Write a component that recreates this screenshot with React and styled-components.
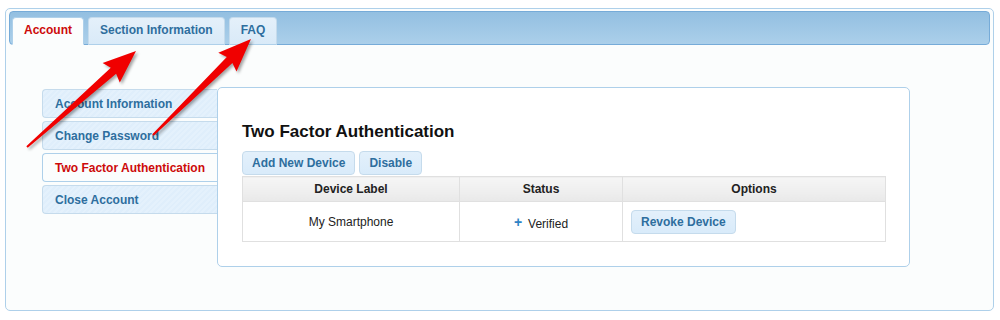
import React from "react";
import styled, { createGlobalStyle } from "styled-components";

const GlobalStyle = createGlobalStyle`
  html, body { margin: 0; padding: 0; background: #ffffff; }
  body { font-family: "Liberation Sans", Arial, sans-serif; }
  * { box-sizing: border-box; }
`;

const Page = styled.div`
  position: relative;
  width: 1000px;
  height: 320px;
  padding: 8px 0 0 5px;
`;

const Widget = styled.div`
  width: 989px;
  height: 303px;
  border: 1px solid #aed0ea;
  border-radius: 5px;
  background: #fbfdfd;
  padding: 2px 3px 3px 3px;
`;

const TabBar = styled.div`
  display: flex;
  align-items: flex-end;
  gap: 4px;
  height: 34px;
  padding: 0 2px;
  border: 1px solid #76abd8;
  border-radius: 4px;
  background: linear-gradient(#93bfe1, #abcfea);
`;

const Tab = styled.div`
  height: 28px;
  margin-bottom: -1px;
  padding: 0 11px;
  display: flex;
  align-items: center;
  padding-bottom: 2px;
  font-size: 12px;
  font-weight: bold;
  border: 1px solid ${(p) => (p.$active ? "#aed0ea" : "#c5dbec")};
  border-bottom: ${(p) => (p.$active ? "1px solid #fbfdfd" : "1px solid #aed0ea")};
  border-radius: 4px 4px 0 0;
  color: ${(p) => (p.$active ? "#cd0a0a" : "#2e6e9e")};
  background: ${(p) =>
    p.$active ? "#fbfdfd" : "linear-gradient(#e4f0fa, #d9eaf8)"};
`;

const Body = styled.div`
  display: flex;
  align-items: flex-start;
  padding: 42px 0 0 33px;
`;

const Nav = styled.div`
  display: flex;
  flex-direction: column;
  gap: 3px;
  width: 175px;
  margin-top: 2px;
`;

const NavItem = styled.div`
  height: 29px;
  display: flex;
  align-items: center;
  padding-left: 12px;
  font-size: 12px;
  font-weight: bold;
  border: 1px solid ${(p) => (p.$active ? "#aed0ea" : "#c5dbec")};
  border-right: none;
  border-radius: 4px 0 0 4px;
  color: ${(p) => (p.$active ? "#cd0a0a" : "#2e6e9e")};
  background: ${(p) =>
    p.$active
      ? "#fbfdfd"
      : "repeating-linear-gradient(135deg, #dfeefb 0 2px, #e4f1fc 2px 4px)"};
`;

const Panel = styled.div`
  position: relative;
  z-index: 1;
  width: 693px;
  height: 180px;
  border: 1px solid #aed0ea;
  border-radius: 5px;
  background: #ffffff;
  padding: 34px 23px 0 24px;
`;

const Heading = styled.h2`
  margin: 0 0 9px 0;
  font-size: 17px;
  line-height: 20px;
  font-weight: bold;
  color: #111111;
`;

const ButtonRow = styled.div`
  display: flex;
  gap: 4px;
  margin-bottom: 1px;
`;

const Button = styled.div`
  height: 24px;
  display: inline-flex;
  align-items: center;
  padding: 0 9px;
  font-size: 12px;
  font-weight: bold;
  color: #2e6e9e;
  background: linear-gradient(#e3f0fb, #d9ebfa);
  border: 1px solid #c5dbec;
  border-radius: 4px;
`;

const Table = styled.table`
  width: 643px;
  border-collapse: collapse;
  table-layout: fixed;
  font-size: 12px;
  color: #222222;
  border: 1px solid #e0e0e0;
`;

const Th = styled.th`
  height: 25px;
  padding: 0;
  font-weight: bold;
  text-align: center;
  background: linear-gradient(#f6f6f6, #e9e9e9);
  border: 1px solid #e0e0e0;
`;

const Td = styled.td`
  height: 40px;
  padding: ${(p) => (p.$left ? "0 8px" : "0")};
  text-align: ${(p) => (p.$left ? "left" : "center")};
  border: 1px solid #e0e0e0;
  background: #ffffff;
`;

const Status = styled.span`
  display: inline-flex;
  align-items: center;
  gap: 6px;
  padding-top: 5px;
`;

const Plus = styled.span`
  color: #2e83c5;
  font-weight: bold;
  font-size: 14px;
  margin-top: -4px;
`;

const Overlay = styled.svg`
  position: absolute;
  left: 0;
  top: 0;
  pointer-events: none;
  z-index: 5;
  filter: drop-shadow(2px 2px 1.5px rgba(0, 0, 0, 0.35));
`;

function arrowPoints(tx, ty, hx, hy, tailW = 2, neckW = 8, headW = 26, headL = 30) {
  const dx = hx - tx;
  const dy = hy - ty;
  const len = Math.hypot(dx, dy);
  const ux = dx / len;
  const uy = dy / len;
  const nx = -uy;
  const ny = ux;
  const kx = hx - ux * headL;
  const ky = hy - uy * headL;
  const pts = [
    [tx + (nx * tailW) / 2, ty + (ny * tailW) / 2],
    [kx + (nx * neckW) / 2, ky + (ny * neckW) / 2],
    [kx - ux * 3 + (nx * headW) / 2, ky - uy * 3 + (ny * headW) / 2],
    [hx, hy],
    [kx - ux * 3 - (nx * headW) / 2, ky - uy * 3 - (ny * headW) / 2],
    [kx - (nx * neckW) / 2, ky - (ny * neckW) / 2],
    [tx - (nx * tailW) / 2, ty - (ny * tailW) / 2],
  ];
  return pts.map((p) => p.map((v) => v.toFixed(1)).join(",")).join(" ");
}

const tabs = [
  { label: "Account", active: true },
  { label: "Section Information" },
  { label: "FAQ" },
];

const navItems = [
  { label: "Account Information" },
  { label: "Change Password" },
  { label: "Two Factor Authentication", active: true },
  { label: "Close Account" },
];

export default function App() {
  return (
    <>
      <GlobalStyle />
      <Page>
        <Widget>
          <TabBar>
            {tabs.map((t) => (
              <Tab key={t.label} $active={t.active}>
                {t.label}
              </Tab>
            ))}
          </TabBar>
          <Body>
            <Nav>
              {navItems.map((n) => (
                <NavItem key={n.label} $active={n.active}>
                  {n.label}
                </NavItem>
              ))}
            </Nav>
            <Panel>
              <Heading>Two Factor Authentication</Heading>
              <ButtonRow>
                <Button>Add New Device</Button>
                <Button>Disable</Button>
              </ButtonRow>
              <Table>
                <colgroup>
                  <col style={{ width: "217px" }} />
                  <col style={{ width: "163px" }} />
                  <col style={{ width: "263px" }} />
                </colgroup>
                <thead>
                  <tr>
                    <Th>Device Label</Th>
                    <Th>Status</Th>
                    <Th>Options</Th>
                  </tr>
                </thead>
                <tbody>
                  <tr>
                    <Td>My Smartphone</Td>
                    <Td>
                      <Status>
                        <Plus>+</Plus>
                        Verified
                      </Status>
                    </Td>
                    <Td $left>
                      <Button>Revoke Device</Button>
                    </Td>
                  </tr>
                </tbody>
              </Table>
            </Panel>
          </Body>
        </Widget>
        <Overlay width="1000" height="320" viewBox="0 0 1000 320">
          <polygon points={arrowPoints(27, 147, 136, 51)} fill="#f00000" />
          <polygon points={arrowPoints(153, 135, 251, 39)} fill="#f00000" />
        </Overlay>
      </Page>
    </>
  );
}
